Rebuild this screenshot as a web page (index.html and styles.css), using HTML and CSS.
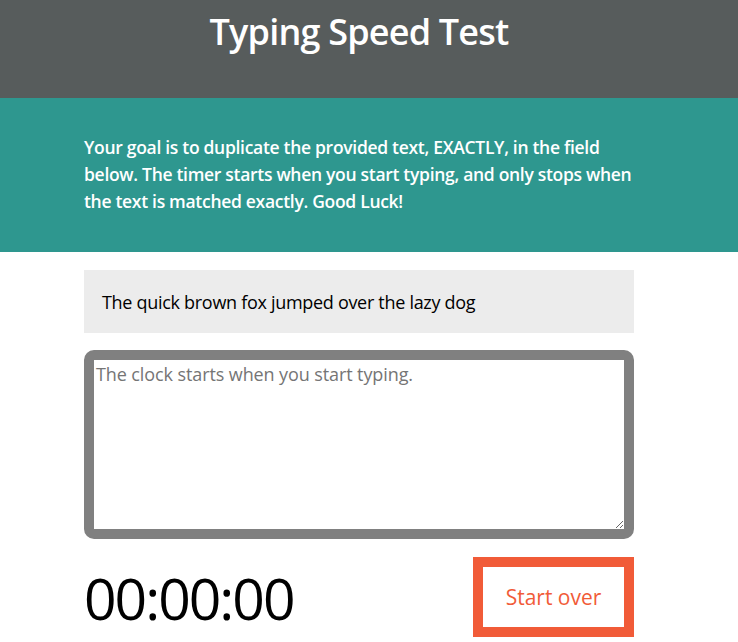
FILE: index.html
```html
<!DOCTYPE html>
<html lang="en">
<head>
<meta charset="utf-8">
<title>Typing Speed Test</title>
<link rel="stylesheet" href="styles.css">
</head>
<body>
  <header class="masthead">
    <div class="inner">
      <h1 class="title">Typing Speed Test</h1>
    </div>
  </header>
  <section class="intro">
    <div class="wrap">
      <p class="intro-text">Your goal is to duplicate the provided text, EXACTLY, in the field<br>below. The timer starts when you start typing, and only stops when<br>the text is matched exactly. Good Luck!</p>
    </div>
  </section>
  <main class="wrap main">
    <div class="origin-text"><p>The quick brown fox jumped over the lazy dog</p></div>
    <div class="test-area">
      <textarea class="test-input" rows="6" placeholder="The clock starts when you start typing."></textarea>
    </div>
    <div class="meta">
      <div class="timer">00:00:00</div>
      <button class="reset" type="button">Start over</button>
    </div>
  </main>
</body>
</html>
```

FILE: styles.css
```css
html, body {
  margin: 0;
  padding: 0;
  background: #fff;
}
body {
  font-family: "Open Sans", "Noto Sans", sans-serif;
  color: #000;
}
.masthead {
  background: #575c5c;
  height: 98px;
}
.inner {
  width: 718px;
  display: flex;
  justify-content: center;
}
.title {
  margin: 8px 0 0;
  color: #fff;
  font-size: 36px;
  font-weight: 600;
  line-height: 48px;
  letter-spacing: -0.8px;
}
.intro {
  background: #2e978f;
  height: 154px;
  padding-top: 36px;
  box-sizing: border-box;
}
.wrap {
  width: 550px;
  margin-left: 84px;
}
.intro-text {
  margin: 0;
  color: #fff;
  font-size: 17.5px;
  font-weight: 600;
  line-height: 27px;
  letter-spacing: -0.3px;
  white-space: nowrap;
}
.main {
  padding-top: 18px;
}
.origin-text {
  background: #ececec;
  height: 63px;
  padding: 0 18px;
  display: flex;
  align-items: center;
}
.origin-text p {
  margin: 0;
  font-size: 18px;
  letter-spacing: -0.3px;
}
.test-area {
  margin-top: 17px;
}
.test-input {
  display: block;
  width: 100%;
  height: 189px;
  box-sizing: border-box;
  border: 10px solid #808080;
  border-radius: 10px;
  padding: 2px;
  font-family: inherit;
  font-size: 18px;
  line-height: 25px;
  letter-spacing: -0.1px;
  resize: both;
  outline: none;
}
.test-input::placeholder {
  color: #757575;
}
.meta {
  display: flex;
  justify-content: space-between;
  align-items: flex-start;
  margin-top: 18px;
}
.timer {
  font-size: 57px;
  line-height: 80px;
  margin-top: 1px;
  letter-spacing: -2px;
}
.reset {
  width: 161px;
  height: 80px;
  border: 10px solid #f15b38;
  background: #fff;
  color: #f15b38;
  font-family: inherit;
  font-size: 21px;
  font-weight: 400;
  padding: 0;
}
```
